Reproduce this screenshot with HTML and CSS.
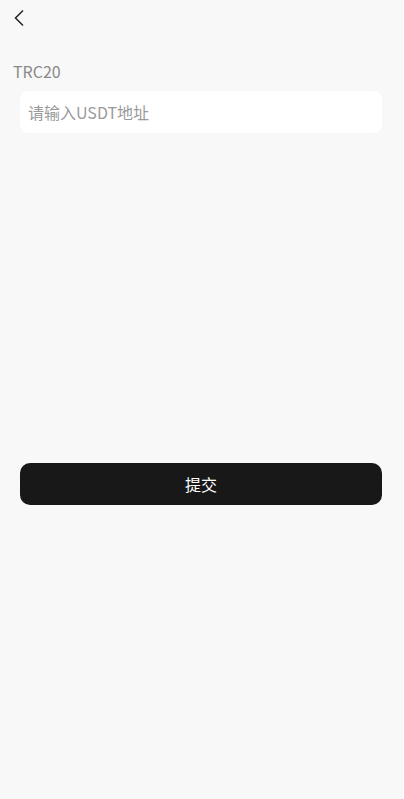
FILE: index.html
```html
<!DOCTYPE html>
<html lang="zh">
<head>
<meta charset="utf-8">
<meta name="viewport" content="width=device-width, initial-scale=1">
<title>USDT</title>
<link rel="stylesheet" href="styles.css">
</head>
<body>
<div class="page">
  <header class="nav">
    <svg class="back" width="12" height="18" viewBox="0 0 12 18" aria-hidden="true">
      <path d="M10 1.5 L2.5 9 L10 16.5" fill="none" stroke="#222" stroke-width="1.5" stroke-linejoin="miter"/>
    </svg>
  </header>
  <div class="label">TRC20</div>
  <div class="field">
    <input class="input" type="text" placeholder="请输入USDT地址">
  </div>
  <div class="actions">
    <button class="submit" type="button">提交</button>
  </div>
</div>
</body>
</html>
```
FILE: styles.css
```css
html, body {
  margin: 0;
  padding: 0;
  background: #ffffff;
}
body {
  font-family: "Noto Sans CJK SC", "Noto Sans", sans-serif;
}
.page {
  margin-right: 1px;
  min-height: 100vh;
  background: #f8f8f8;
  box-sizing: border-box;
}
.nav {
  height: 36px;
  display: flex;
  align-items: center;
  padding-left: 13px;
}
.back {
  display: block;
}
.label {
  margin-top: 24px;
  padding-left: 13px;
  font-size: 16px;
  line-height: 22px;
  color: #8a8a8a;
}
.field {
  margin: 9px 21px 0 20px;
}
.input {
  display: block;
  width: 100%;
  box-sizing: border-box;
  height: 42px;
  border: none;
  outline: none;
  border-radius: 8px;
  background: #ffffff;
  padding: 0 8px;
  font-family: inherit;
  font-size: 16px;
  color: #333;
}
.input::placeholder {
  color: #9a9a9a;
}
.actions {
  margin: 330px 21px 0 20px;
}
.submit {
  display: block;
  width: 100%;
  height: 42px;
  border: none;
  border-radius: 10px;
  background: #181818;
  color: #ffffff;
  font-family: inherit;
  font-size: 16px;
  cursor: pointer;
}
```
